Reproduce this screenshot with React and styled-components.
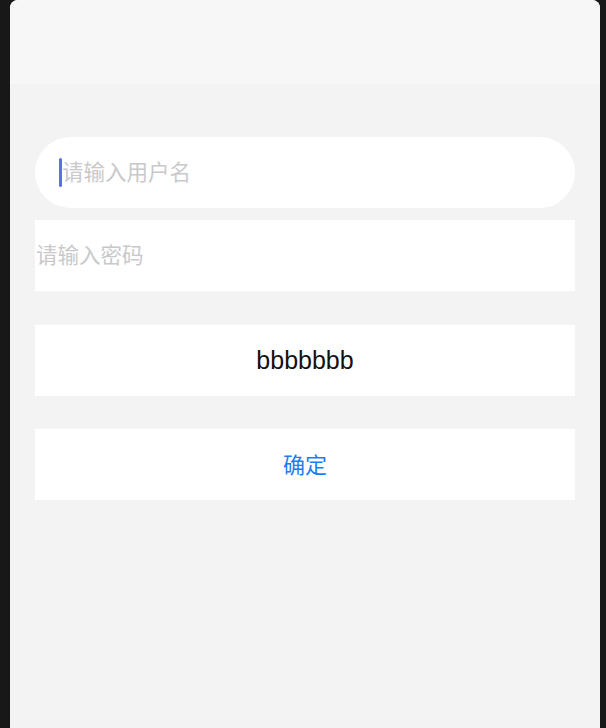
import React from "react";
import { styled, createGlobalStyle } from "styled-components";

const GlobalStyle = createGlobalStyle`
  html, body {
    margin: 0;
    padding: 0;
    background: #181818;
  }
  body {
    font-family: "Liberation Sans", "Noto Sans CJK SC", sans-serif;
  }
`;

function App() {
  return (
    <>
      <GlobalStyle />
      <Screen>
        <Header />
        <Form>
          <Field shape="pill">
            <Caret />
            <Placeholder>请输入用户名</Placeholder>
          </Field>
          <Field shape="flat" indent={1}>
            <Placeholder>请输入密码</Placeholder>
          </Field>
          <Button gap={34}>
            <ButtonText>bbbbbbb</ButtonText>
          </Button>
          <Button gap={33} primary>
            <CjkLabel>确定</CjkLabel>
          </Button>
        </Form>
      </Screen>
    </>
  );
}

export default App;

const Screen = styled.div`
  width: 590px;
  height: 728px;
  margin-left: 10px;
  background: #f3f3f3;
  border-radius: 8px 8px 0 0;
  overflow: hidden;
  display: flex;
  flex-direction: column;
`;

const Header = styled.div`
  height: 84px;
  background: #f7f7f7;
  flex-shrink: 0;
`;

const Form = styled.div`
  padding: 53px 25px 0;
  display: flex;
  flex-direction: column;
`;

const Field = styled.div`
  height: 71px;
  background: #ffffff;
  display: flex;
  align-items: center;
  box-sizing: border-box;
  padding-left: ${(p) => (p.shape === "pill" ? "24px" : `${p.indent || 0}px`)};
  border-radius: ${(p) => (p.shape === "pill" ? "36px" : "0")};
  margin-top: ${(p) => (p.shape === "pill" ? "0" : "12px")};
`;

const Caret = styled.span`
  width: 3px;
  height: 29px;
  border-radius: 2px;
  background: #5b6ef2;
`;

const Placeholder = styled.span`
  font-family: "Noto Sans CJK SC", sans-serif;
  font-size: 21.5px;
  line-height: 1;
  color: #c9c9cb;
  margin-top: -4px;
`;

const Button = styled.div`
  height: 71px;
  margin-top: ${(p) => p.gap}px;
  background: #ffffff;
  display: flex;
  align-items: center;
  justify-content: center;
  color: ${(p) => (p.primary ? "#1a7ef6" : "#111111")};
`;

const CjkLabel = styled.span`
  font-family: "Noto Sans CJK SC", sans-serif;
  font-size: 22px;
  line-height: 1;
  margin-top: -3px;
`;

const ButtonText = styled.span`
  font-family: "Liberation Sans", sans-serif;
  font-size: 25px;
`;
